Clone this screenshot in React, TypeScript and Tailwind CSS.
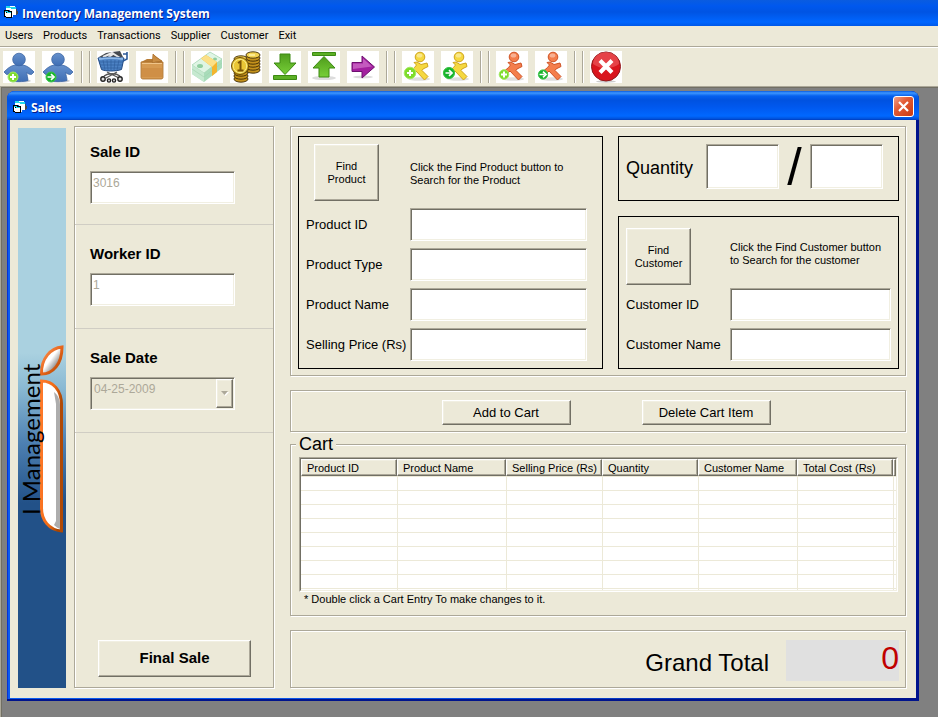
import React from "react";

const etched =
  "border border-[#aca899] shadow-[inset_1px_1px_0_#fff,1px_1px_0_#fff]";
const sunken =
  "border border-t-[#aca899] border-l-[#aca899] border-b-white border-r-white shadow-[inset_1px_1px_0_#716f64,inset_-1px_-1px_0_#f1efe2] outline-none";
const raised =
  "border border-t-white border-l-white border-b-[#716f64] border-r-[#716f64] bg-[#ece9d8] shadow-[inset_-1px_-1px_0_#aca899,inset_1px_1px_0_#f1efe2]";

function FormIcon() {
  return (
    <svg width="16" height="16" viewBox="0 0 16 16" className="shrink-0" shapeRendering="crispEdges" aria-hidden="true">
      <path d="M13 4h1v2h1v3h-1v1h-2V4z" fill="#4a4a4a" />
      <path d="M3 1h9v1h1v8h-3v2H7V5H3z" fill="#fff" />
      <path d="M3 1h4v1h6v2H8V3H3z" fill="#21d8ea" />
      <path d="M1 5h5v1h3v7H3v-1H1z" fill="#000" />
      <path d="M2 7h1v4H2zM3 8h5v4H3z" fill="#fff" />
      <path d="M2 6h3v1H2zM4 7h4v1H4z" fill="#21d8ea" />
    </svg>
  );
}

function AddBadge({ cx, cy, r = 5 }: { cx: number; cy: number; r?: number }) {
  return (
    <g>
      <circle cx={cx} cy={cy} r={r} fill="#7edc2c" stroke="#a4ea63" />
      <path d={`M${cx - 3} ${cy}h6M${cx} ${cy - 3}v6`} stroke="#fff" strokeWidth="2" />
    </g>
  );
}

function GoBadge({ cx, cy, r = 5 }: { cx: number; cy: number; r?: number }) {
  return (
    <g>
      <circle cx={cx} cy={cy} r={r} fill="#15b32b" stroke="#3cc448" />
      <path
        d={`M${cx - 3.5} ${cy}h5M${cx} ${cy - 2.8}l3 2.8l-3 2.8`}
        stroke="#fff"
        strokeWidth="1.7"
        fill="none"
      />
    </g>
  );
}

function Worker({ go }: { go?: boolean }) {
  return (
    <>
      <defs>
        <linearGradient id="worker" x1="0" y1="0" x2="0" y2="1">
          <stop offset="0" stopColor="#6590cc" />
          <stop offset="1" stopColor="#3f6eb4" />
        </linearGradient>
      </defs>
      <ellipse cx="17" cy="30" rx="11" ry="1.6" fill="#cfcfcf" />
      <path
        d="M12 14h8c5 1 8 4 11 7l-2.500 2.500c-2 0-4-1-5-2c.5 3 1.500 5 1.500 8c-4 1.500-14 1.500-18 0c0-3 1-5 1.500-8c-1 1-3 2-5 2L1 21c3-3 6-6 11-7z"
        fill="url(#worker)"
        stroke="#3c66a5"
        strokeWidth=".8"
      />
      <circle cx="16" cy="8.500" r="6.300" fill="url(#worker)" stroke="#3c66a5" strokeWidth=".8" />
      {go ? <GoBadge cx={9} cy={26} /> : <AddBadge cx={10} cy={26} />}
    </>
  );
}

function Runner({ red, go }: { red?: boolean; go?: boolean }) {
  const fill = red ? "#f47e4c" : "#f5d840";
  const line = red ? "#cf5324" : "#cfa41c";
  return (
    <>
      <ellipse cx="17" cy="28" rx="11" ry="1.800" fill="#dedede" />
      <path
        d="M12 11.500l3-.5l4 2.500l6-1.500l1 3.500l-5 2.500l-1 1.500l6 6l-3.500 3.500l-8.500-9l-6 6l-3-3l7.500-6.500l2-2.500z"
        fill={fill}
        stroke={line}
        strokeLinejoin="round"
      />
      <circle cx="18" cy="6" r="4.800" fill={fill} stroke={line} />
      <ellipse cx="17.500" cy="4.500" rx="2.800" ry="2" fill="#fff" opacity=".4" />
      {go ? (
        <GoBadge cx={8} cy={red ? 23.5 : 22} r={red ? 4.6 : 5.6} />
      ) : (
        <AddBadge cx={8} cy={red ? 23.5 : 22} r={red ? 4.8 : 5.8} />
      )}
    </>
  );
}

function Cart() {
  return (
    <>
      <path d="M2 6l7-4l6-1l8-1l3 6z" fill="#454a50" />
      <path d="M6 6l9-4l8 5M11 7l6-5" fill="none" stroke="#e8e8e8" strokeWidth="2" />
      <path d="M1 7c6-1 20-1 26 0l-2.500 11.500c-6 2-16 2-20 0z" fill="#4c82c4" stroke="#1f4780" />
      <path
        d="M2 11h24M3 14h22M4 17h20M6 9l2 10M10 9l1 10M14 9v10M18 9l-1 10M22 9l-2 10"
        stroke="#2f5f9f"
        strokeWidth=".7"
      />
      <path d="M2 8c6-1 18-1 24 0" stroke="#8db8e8" strokeWidth="2" fill="none" />
      <path d="M26 3h4v5l-4 2M30 1v3" fill="none" stroke="#2c5a99" strokeWidth="1.600" />
      <path d="M10 21l12 6M20 21L9 27M7 25c4-3 12-3 16 0" fill="none" stroke="#555" strokeWidth="1.300" />
      <g fill="#ddd" stroke="#222" strokeWidth="1.400">
        <circle cx="6" cy="28" r="2.200" />
        <circle cx="12" cy="29.500" r="1.600" />
        <circle cx="17" cy="29.500" r="1.600" />
        <circle cx="23" cy="28" r="2.200" />
      </g>
    </>
  );
}

function Box() {
  return (
    <>
      <path d="M5 11l6-3h6v-5l9 7l1 2z" fill="#b87c35" />
      <path d="M17 3c2 3 6 5 9 7l-7 1l-3 2z" fill="#c98d44" stroke="#a66b28" strokeWidth=".6" />
      <path d="M5 11h10l3 1l9-1v15.500c0 1-1 1.500-2 1.500H7c-1.500 0-2-1-2-2z" fill="#d69a51" stroke="#a86f2c" strokeWidth=".8" />
      <path d="M6 12.500h20" stroke="#f0c488" fill="none" />
      <path d="M6 17h20v9H6z" fill="#c9893f" opacity=".6" />
    </>
  );
}

function Cash() {
  return (
    <>
      <path d="M1 14L19 1l12 7v9L13 31L1 23z" fill="#a8dcba" />
      <path d="M1 14L19 1l12 7L13 22z" fill="#dff5e4" stroke="#9fd0ae" strokeWidth=".6" />
      <path d="M1 14l12 8v9L1 23z" fill="#c6e9d0" />
      <path d="M1 18l12 8l18-14" stroke="#9fd2ad" strokeWidth=".6" fill="none" />
      <ellipse cx="9" cy="15" rx="3" ry="2" fill="#8fce9f" />
      <ellipse cx="24" cy="8" rx="2" ry="1.500" fill="#8fce9f" />
      <path d="M10 7.500l5-3.500l11 7v10l-5 4v-9z" fill="#f3b52e" />
      <path d="M10 7.500l5-3.500l11 7l-5 5z" fill="#fbe087" />
    </>
  );
}

function Stack({ x, y, n }: { x: number; y: number; n: number }) {
  return (
    <g>
      {Array.from({ length: n }, (_, i) => (
        <ellipse
          key={i}
          cx={x}
          cy={y + (n - 1 - i) * 3}
          rx="7"
          ry="3.200"
          fill={i === n - 1 ? "#f2d352" : "#c4921c"}
          stroke="#3d2a05"
          strokeWidth=".9"
        />
      ))}
      <path d={`M${x - 4} ${y}h6`} stroke="#fff3a8" strokeWidth="1.500" />
    </g>
  );
}

function Coins() {
  return (
    <>
      <Stack x={11} y={8} n={4} />
      <Stack x={23} y={4} n={6} />
      <Stack x={11} y={19} n={4} />
      <circle cx="10" cy="15" r="8.500" fill="#eac636" stroke="#6b4b08" />
      <circle cx="10" cy="15" r="6.700" fill="none" stroke="#f9ec8c" />
      <path d="M8 12l2.500-1.500V19M7.500 19.500h6" stroke="#7b5508" strokeWidth="2" fill="none" />
    </>
  );
}

function GreenGradient() {
  return (
    <defs>
      <linearGradient id="green" x1="0" y1="0" x2="0" y2="1">
        <stop offset="0" stopColor="#4f9d1c" />
        <stop offset="1" stopColor="#77cf38" />
      </linearGradient>
    </defs>
  );
}

function Download() {
  return (
    <>
      <GreenGradient />
      <path d="M11 3h10v9h6L16 23.500L5 12h6z" fill="url(#green)" stroke="#3c8a12" strokeLinejoin="round" />
      <path d="M4.500 24.500h23v4h-23z" fill="#5cb025" stroke="#3c8a12" />
    </>
  );
}

function Upload() {
  return (
    <>
      <GreenGradient />
      <ellipse cx="16" cy="27" rx="12" ry="2" fill="#dcdcdc" />
      <path d="M4.500 1.500h23v3h-23z" fill="#5cb025" stroke="#3c8a12" />
      <path d="M16 5.500L27 17h-6v9H11v-9H5z" fill="url(#green)" stroke="#3c8a12" strokeLinejoin="round" />
    </>
  );
}

function Forward() {
  return (
    <>
      <ellipse cx="16" cy="26" rx="10" ry="1.500" fill="#dcdcdc" />
      <path d="M5 11.500h10V5l12.500 11L15 27v-6.500H5z" fill="#a3209f" stroke="#6e0f70" strokeLinejoin="round" />
      <path d="M6 12.500h10V7.500l9 8L6 18z" fill="#d174cc" opacity=".7" />
    </>
  );
}

function Quit() {
  return (
    <>
      <ellipse cx="16" cy="30.500" rx="10" ry="1.200" fill="#ccc" />
      <circle cx="16" cy="15.500" r="14.500" fill="#d9151d" stroke="#8e1a1c" />
      <path d="M3 13a13 12 0 0 1 26 0c-6 5-18 6-26 0z" fill="#f0686a" opacity=".55" />
      <path d="M10 9.500l12 12M22 9.500l-12 12" stroke="#fff" strokeWidth="4.200" />
    </>
  );
}

const toolGroups: { label: string; icon: React.ReactNode }[][] = [
  [
    { label: "Add user", icon: <Worker /> },
    { label: "Open user", icon: <Worker go /> },
  ],
  [
    { label: "Sales", icon: <Cart /> },
    { label: "Products", icon: <Box /> },
  ],
  [
    { label: "Payments", icon: <Cash /> },
    { label: "Receipts", icon: <Coins /> },
    { label: "Stock in", icon: <Download /> },
    { label: "Stock out", icon: <Upload /> },
    { label: "Transfer", icon: <Forward /> },
  ],
  [
    { label: "Add supplier", icon: <Runner /> },
    { label: "Open supplier", icon: <Runner go /> },
  ],
  [
    { label: "Add customer", icon: <Runner red /> },
    { label: "Open customer", icon: <Runner red go /> },
  ],
  [{ label: "Exit", icon: <Quit /> }],
];

function Toolbar() {
  return (
    <div className="flex gap-[7px] border-t border-[#aca899] px-[3px] pt-1 pb-[3px] shadow-[inset_0_1px_0_#fff]">
      {toolGroups.map((group, g) => (
        <React.Fragment key={g}>
          {g > 0 && (
            <div className="flex w-[9px] shrink-0 justify-between">
              <div className="w-px bg-[#aca899] shadow-[1px_0_0_#fff]" />
              <div className="w-px bg-[#aca899] shadow-[1px_0_0_#fff]" />
            </div>
          )}
          {group.map((tool) => (
            <button key={tool.label} type="button" aria-label={tool.label} className="size-8 shrink-0 bg-white">
              <svg width="32" height="32" viewBox="0 0 32 32" aria-hidden="true">
                {tool.icon}
              </svg>
            </button>
          ))}
        </React.Fragment>
      ))}
    </div>
  );
}

function Banner() {
  return (
    <div className="mt-[2px] w-12 shrink-0 bg-[linear-gradient(#aad1e0_0px,#aad1e0_225px,#8ab9d3_260px,#4d80b2_315px,#225188_375px,#225188_100%)]">
      <svg width="48" height="420" viewBox="0 0 48 420" className="overflow-visible" role="img" aria-label="I Management">
        <defs>
          <linearGradient id="rim" x1="0" y1="0" x2="1" y2="0.300">
            <stop offset="0" stopColor="#ff7a2b" />
            <stop offset="0.600" stopColor="#f06a14" />
            <stop offset="1" stopColor="#a84400" />
          </linearGradient>
          <linearGradient id="leaf-rim" x1="0" y1="0" x2="1" y2="1">
            <stop offset="0" stopColor="#ff9a5c" />
            <stop offset="0.500" stopColor="#e8651a" />
            <stop offset="1" stopColor="#a84400" />
          </linearGradient>
          <linearGradient id="leaf" x1="0" y1="0" x2="1" y2="1">
            <stop offset="0.450" stopColor="#fff" />
            <stop offset="0.750" stopColor="#7b7b7b" />
          </linearGradient>
        </defs>
        <path d="M44 219C33 220 23 230 23.500 246C35 246 44 236 44 219z" fill="url(#leaf)" stroke="url(#leaf-rim)" strokeWidth="3" />
        <path
          d="M23.500 253C35 253 43.500 262 43.500 277V403C31 402 23.500 392 23.500 380z"
          fill="#fff"
          stroke="url(#rim)"
          strokeWidth="3"
        />
        <path d="M36 264c4 3 6 8 6 13v124c-2-1-4-2-6-4l2-4V276z" fill="#adadad" />
        <path d="M43.500 275V404" stroke="#b04a06" strokeWidth="3" />
        <text
          transform="translate(22 387) rotate(-90)"
          fontFamily="Lato, sans-serif"
          fontWeight="400"
          fontSize="24"
          fill="#000"
        >
          I Management
        </text>
      </svg>
    </div>
  );
}

function SideSection({ id, label, first, children }: { id: string; label: string; first?: boolean; children: React.ReactNode }) {
  return (
    <div
      className={
        first
          ? "h-[98px] border-b border-[#d0cdc4] px-[15px] pt-[15px]"
          : "h-[104px] border-b border-[#d0cdc4] px-[15px] pt-[19px]"
      }
    >
      <label htmlFor={id} className="block text-[15px] leading-5 font-bold">
        {label}
      </label>
      <div className="mt-[9px] w-[145px]">{children}</div>
    </div>
  );
}

function Field({ id, label }: { id: string; label: string }) {
  return (
    <div className="flex items-center pl-[7px]">
      <label htmlFor={id} className="w-[104px] shrink-0 text-[13px] whitespace-nowrap">
        {label}
      </label>
      <input id={id} className={`h-[33px] min-w-0 flex-1 bg-white px-1 text-[12px] ${sunken}`} />
    </div>
  );
}

const columns = [
  { name: "Product ID", width: "w-[96px]" },
  { name: "Product Name", width: "w-[109px]" },
  { name: "Selling Price (Rs)", width: "w-[96px]" },
  { name: "Quantity", width: "w-[96px]" },
  { name: "Customer Name", width: "w-[99px]" },
  { name: "Total Cost (Rs)", width: "w-[96px]" },
];

function CartTable() {
  return (
    <div className="border border-t-[#aca899] border-l-[#aca899] border-b-white border-r-white">
      <div className="h-[133px] overflow-hidden border border-t-[#716f64] border-l-[#716f64] border-b-[#f1efe2] border-r-[#f1efe2] bg-white">
        <table className="w-full table-fixed border-separate border-spacing-0 text-[11px] leading-3">
          <thead>
            <tr>
              {columns.map((c) => (
                <th key={c.name} className={`h-[17px] pl-[5px] text-left font-normal whitespace-nowrap ${c.width} ${raised}`}>
                  {c.name}
                </th>
              ))}
              <th aria-label="Filler" className={`h-[17px] p-0 ${raised}`} />
            </tr>
          </thead>
          <tbody>
            {Array.from({ length: 9 }, (_, r) => (
              <tr key={r}>
                {Array.from({ length: 7 }, (_, c) => (
                  <td
                    key={c}
                    className={
                      c === 0
                        ? "h-[14px] border-t border-[#ece9d8] p-0"
                        : "h-[14px] border-t border-l border-[#ece9d8] p-0"
                    }
                  />
                ))}
              </tr>
            ))}
          </tbody>
        </table>
      </div>
    </div>
  );
}

function SalesWindow() {
  return (
    <section className="rounded-t-[8px] bg-[linear-gradient(90deg,#0a5cf0,#0a4fe0_50%,#00138c)] shadow-[inset_1px_0_0_#0831d9]">
      <header className="flex h-[29px] items-start rounded-t-[8px] bg-[linear-gradient(#0a5ce0_0px,#3c96ff_2px,#0560ee_5px,#0052e0_9px,#0058ee_16px,#0068ff_25px,#0050d8_28px,#0038b8_29px)] pt-[5px] pr-[5px] pl-[5px]">
        <div className="flex flex-1 items-center gap-[3px] pt-[2px]">
          <FormIcon />
          <h2 className="pt-px font-['Open_Sans','Noto_Sans',sans-serif] text-[12px] leading-[18px] font-bold text-white [text-shadow:1px_1px_0_#0a1883]">
            Sales
          </h2>
        </div>
        <button
          type="button"
          aria-label="Close"
          className="size-[21px] rounded-[3px] border border-white bg-[linear-gradient(135deg,#f0a088,#e35b35_40%,#c93a10)]"
        >
          <svg width="19" height="19" viewBox="0 0 19 19" aria-hidden="true">
            <path d="M5 5l9 9M14 5l-9 9" stroke="#fff" strokeWidth="2.200" />
          </svg>
        </button>
      </header>
      <div className="border-b-2 border-[#00138c] px-[3px] pb-px">
        <div className="flex bg-[#ece9d8] pt-[6px] pr-[10px] pb-[10px] pl-2">
          <Banner />
          <form className={`ml-2 flex w-[200px] shrink-0 flex-col ${etched}`}>
            <SideSection id="sale-id" label="Sale ID" first>
              <input
                id="sale-id"
                disabled
                defaultValue="3016"
                className={`block h-[33px] w-full bg-white pb-[10px] pl-[2px] text-[12px] text-[#aca899] ${sunken}`}
              />
            </SideSection>
            <SideSection id="worker-id" label="Worker ID">
              <input
                id="worker-id"
                disabled
                defaultValue="1"
                className={`block h-[33px] w-full bg-white pb-[10px] pl-[2px] text-[12px] text-[#aca899] ${sunken}`}
              />
            </SideSection>
            <SideSection id="sale-date" label="Sale Date">
              <div className="relative">
                <select
                  id="sale-date"
                  disabled
                  className={`block h-[33px] w-full appearance-none bg-[#ece9d8] pb-[10px] pl-[3px] text-[12px] text-[#aca899] opacity-100 ${sunken}`}
                >
                  <option>04-25-2009</option>
                </select>
                <span className={`pointer-events-none absolute top-[2px] right-[2px] flex h-[29px] w-[17px] items-center justify-center ${raised}`}>
                  <svg width="8" height="5" viewBox="0 0 8 5" aria-hidden="true">
                    <path d="M1 1h7L4.500 5z" fill="#fff" />
                    <path d="M0 0h7L3.500 4z" fill="#aca899" />
                  </svg>
                </span>
              </div>
            </SideSection>
            <button type="button" className={`mx-[23px] mt-auto mb-[10px] h-[37px] w-[153px] text-[15px] font-bold ${raised}`}>
              Final Sale
            </button>
          </form>

          <div className="ml-4 min-w-0 flex-1">
            <div className={`grid grid-cols-[305fr_281fr] gap-[15px] pt-[9px] pr-[6px] pb-[6px] pl-[7px] ${etched}`}>
              <div className="flex min-w-0 flex-col gap-[7px] border border-black py-[7px] pr-[15px]">
                <div className="flex items-center pl-[15px]">
                  <div className="w-24 shrink-0">
                    <button type="button" className={`block h-[57px] w-[65px] text-[11px] leading-[13px] ${raised}`}>
                      Find
                      <br />
                      Product
                    </button>
                  </div>
                  <p className="pt-[2px] text-[11px] leading-[13px] whitespace-nowrap">
                    Click the Find Product button to
                    <br />
                    Search for the Product
                  </p>
                </div>
                <Field id="product-id" label="Product ID" />
                <Field id="product-type" label="Product Type" />
                <Field id="product-name" label="Product Name" />
                <Field id="selling-price" label="Selling Price (Rs)" />
              </div>
              <div className="flex min-w-0 flex-col gap-[15px]">
                <div className="flex h-[65px] items-start border border-black pt-[7px] pr-[15px] pl-[7px]">
                  <label htmlFor="quantity" className="w-20 shrink-0 text-[18px] leading-[48px]">
                    Quantity
                  </label>
                  <input id="quantity" className={`h-[45px] min-w-0 flex-1 bg-white px-1 text-[18px] ${sunken}`} />
                  <span className="w-[31px] shrink-0 text-center text-[52px] leading-[46px] font-medium">/</span>
                  <input
                    aria-label="Quantity in stock"
                    className={`h-[45px] min-w-0 flex-1 bg-white px-1 text-[18px] ${sunken}`}
                  />
                </div>
                <div className="flex flex-1 flex-col gap-[7px] border border-black pt-[11px] pr-[7px] pb-[7px]">
                  <div className="-mb-1 flex items-center pl-[7px]">
                    <div className="w-[104px] shrink-0">
                      <button type="button" className={`block h-[57px] w-[65px] text-[11px] leading-[13px] ${raised}`}>
                        Find
                        <br />
                        Customer
                      </button>
                    </div>
                    <p className="pb-[6px] text-[11px] leading-[13px] whitespace-nowrap">
                      Click the Find Customer button
                      <br />
                      to Search for the customer
                    </p>
                  </div>
                  <Field id="customer-id" label="Customer ID" />
                  <Field id="customer-name" label="Customer Name" />
                </div>
              </div>
            </div>

            <div className={`mt-[14px] flex justify-center gap-[71px] pt-[9px] pb-[6px] pl-4 ${etched}`}>
              <button type="button" className={`h-[25px] w-[129px] text-[13px] ${raised}`}>
                Add to Cart
              </button>
              <button type="button" className={`h-[25px] w-[129px] text-[13px] ${raised}`}>
                Delete Cart Item
              </button>
            </div>

            <div className={`relative mt-3 h-[172px] pt-3 pr-[7px] pl-2 ${etched}`}>
              <h3 className="absolute -top-[11px] left-[5px] bg-[#ece9d8] px-[3px] text-[18px] leading-5">Cart</h3>
              <CartTable />
              <p className="pl-[5px] text-[11px] leading-[15px]">* Double click a Cart Entry To make changes to it.</p>
            </div>

            <div className={`mt-[14px] flex items-center justify-end pt-[9px] pr-[6px] pb-[6px] ${etched}`}>
              <label htmlFor="grand-total" className="mr-[17px] pt-1 text-[24px] leading-8">
                Grand Total
              </label>
              <output id="grand-total" className="h-[41px] w-[113px] bg-[#e0e0e0] text-right text-[32px] leading-9 text-[#c00000]">
                0
              </output>
            </div>
          </div>
        </div>
      </div>
    </section>
  );
}

export default function App() {
  return (
    <div className="flex min-h-screen flex-col bg-[#ece9d8] font-['Liberation_Sans',Arial,sans-serif] text-black">
      <header className="flex h-[26px] items-center gap-[3px] bg-[linear-gradient(#0a5ce0_0px,#0058ee_6px,#0054e3_12px,#0066ff_22px,#0058e8_26px)] pl-[3px]">
        <FormIcon />
        <h1 className="pt-[2px] font-['Open_Sans','Noto_Sans',sans-serif] text-[12px] leading-5 font-bold text-white [text-shadow:1px_1px_0_#0a1883]">
          Inventory Management System
        </h1>
      </header>
      <nav className="flex h-5 items-center gap-[10px] px-[5px] font-['Roboto',sans-serif] text-[11px]">
        {["Users", "Products", "Transactions", "Supplier", "Customer", "Exit"].map((item) => (
          <button key={item} type="button">
            {item}
          </button>
        ))}
      </nav>
      <Toolbar />
      <main className="flex-1 border-t border-l border-[#aca899] bg-[#808080] pt-1 pr-[19px] pb-4 pl-[6px] shadow-[inset_1px_1px_0_#716f64]">
        <SalesWindow />
      </main>
    </div>
  );
}
